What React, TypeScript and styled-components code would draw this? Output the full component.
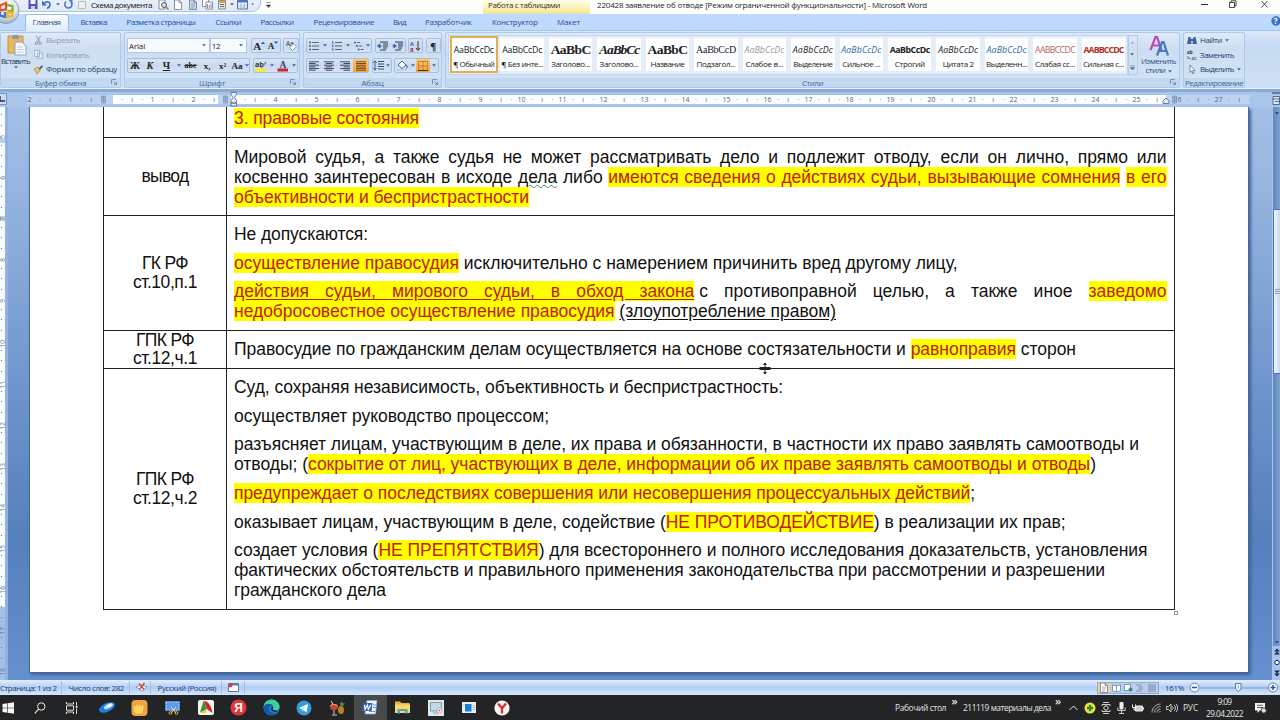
import { useLayoutEffect, useRef } from "react";
import type { ReactNode } from "react";
import styled, { createGlobalStyle, css } from "styled-components";

const GlobalStyle = createGlobalStyle`
  * {
    box-sizing: border-box;
  }

  body {
    margin: 0;
    overflow: hidden;
  }
`;

const Window = styled.div`
  background: #6f97cd;
  color: #1e395b;
  display: flex;
  flex-direction: column;
  font-family: "Open Sans", "Noto Sans", sans-serif;
  font-size: 8px;
  height: 720px;
  line-height: 10px;
  overflow: hidden;
  position: relative;
  white-space: nowrap;
  width: 1280px;
`;

/* Text */

const FitSpan = styled.span`
  display: inline-block;
  white-space: nowrap;
`;

type FitProps = {
  w: number;
  children: ReactNode;
};

// Spreads the letters so that the text takes exactly w pixels
const Fit = ({ w, children }: FitProps) => {
  const ref = useRef<HTMLSpanElement>(null);

  useLayoutEffect(() => {
    const el = ref.current;
    if (!el) return;
    el.style.letterSpacing = "0px";
    const natural = el.getBoundingClientRect().width;
    const count = el.textContent?.length || 1;
    el.style.letterSpacing = `${(w - natural) / count}px`;
  }, [w, children]);

  return <FitSpan ref={ref}>{children}</FitSpan>;
};

/* Title bar */

const TitleBar = styled.header`
  background: #fffffc;
  display: flex;
  flex: none;
  height: 14px;
`;

const QuickAccess = styled.div`
  align-items: center;
  background: linear-gradient(#e9f0fa, #dfe9f7);
  border: 1px solid #b3c3da;
  border-left: 0;
  border-radius: 0 0 9px 0;
  border-top: 0;
  display: flex;
  height: 12px;
  padding: 0 0 2px 27px;
  width: 261px;
`;

const Slot = styled.div<{ w: number }>`
  align-items: center;
  color: #111;
  display: flex;
  flex: none;
  height: 10px;
  justify-content: center;
  width: ${({ w }) => w}px;
`;

const TitleGap = styled.div<{ w: number }>`
  flex: none;
  width: ${({ w }) => w}px;
`;

const ContextTitle = styled.div`
  background: linear-gradient(#fffdf0, #f9efa0 75%, #e6e3a8);
  color: #333;
  padding-left: 5px;
  width: 107px;
`;

const DocTitle = styled.div`
  color: #222;
  padding-left: 7px;
  width: 605px;
`;

const WindowButtons = styled.div`
  display: flex;
  gap: 20px;
`;

const OfficeButton = styled.div`
  left: -7px;
  position: absolute;
  top: -4px;
`;

/* Tabs */

const TabStrip = styled.nav`
  align-items: center;
  background: #bfdaff;
  border-bottom: 1px solid #a7c4ea;
  display: flex;
  flex: none;
  height: 17px;
  padding-left: 24px;
`;

const Tab = styled.div<{ ml: number; active?: boolean }>`
  color: #2d5186;
  height: 17px;
  margin-left: ${({ ml }) => ml}px;
  padding-top: 3px;

  ${({ active }) =>
    active &&
    css`
      background: linear-gradient(#fafcff, #e0ecfa);
      border: 1px solid #9dbbe0;
      border-bottom: 0;
      border-radius: 3px 3px 0 0;
      margin-top: 1px;
      padding: 2px 7px 0;
    `}
`;

const HelpSlot = styled.div`
  margin-left: auto;
`;

/* Ribbon */

const Ribbon = styled.section`
  background: linear-gradient(#dbe8f8, #c8dbf2 25%, #cfe0f5);
  border-bottom: 1px solid #eaf3fd;
  display: flex;
  flex: none;
  gap: 3px;
  height: 58px;
  padding-top: 1px;
`;

const Group = styled.div<{ w: number }>`
  background: linear-gradient(#dfeaf7, #cddef2 30%, #d3e4f6);
  border: 1px solid #b0c9e8;
  border-radius: 2px;
  display: flex;
  flex: none;
  flex-direction: column;
  height: 56px;
  width: ${({ w }) => w}px;
`;

const GroupBody = styled.div`
  flex: 1;
  min-height: 0;
`;

const Caption = styled.div`
  align-items: center;
  background: #c1d8f1;
  color: #46699c;
  display: flex;
  height: 9px;
  justify-content: center;
  position: relative;
`;

const Launcher = styled.svg`
  position: absolute;
  right: 3px;
  top: 1px;
`;

const ToolRow = styled.div<{ top: number }>`
  display: flex;
  gap: 2.5px;
  padding: ${({ top }) => top}px 0 0 2px;
`;

const ToolBox = styled.div`
  align-items: center;
  background: linear-gradient(#d8e5f5, #c8d9ef 50%, #d4e3f5);
  border: 1px solid #a5bfe0;
  border-radius: 2px;
  display: flex;
  flex: none;
  height: 15px;
`;

const Tool = styled.div<{ w: number; on?: boolean }>`
  align-items: center;
  background: ${({ on }) => (on ? "linear-gradient(#fbc77a, #f3a33d)" : "none")};
  color: #222;
  display: flex;
  flex: none;
  height: 13px;
  justify-content: center;
  width: ${({ w }) => w}px;
`;

const Combo = styled.div<{ w: number }>`
  align-items: center;
  background: #f6fafe;
  border: 1px solid #b0c8e6;
  color: #222;
  display: flex;
  height: 15px;
  justify-content: space-between;
  margin-right: -2.5px;
  padding: 0 3px 0 1px;
  width: ${({ w }) => w}px;
`;

const Letter = styled.span<{
  size?: number;
  italic?: boolean;
  line?: string;
  color?: string;
}>`
  color: ${({ color }) => color || "#222"};
  font-family: "Liberation Serif", serif;
  font-size: ${({ size }) => size || 9}px;
  font-style: ${({ italic }) => (italic ? "italic" : "normal")};
  font-weight: bold;
  text-decoration: ${({ line }) => line || "none"};
`;

const ClipboardBody = styled.div`
  display: flex;
`;

const PasteButton = styled.div`
  align-items: center;
  display: flex;
  flex-direction: column;
  padding-top: 1px;
  width: 29px;
`;

const CommandList = styled.div<{ left: number }>`
  display: flex;
  flex-direction: column;
  gap: 4.6px;
  padding: 2px 0 0 ${({ left }) => left}px;
`;

const Command = styled.div<{ faded?: boolean }>`
  align-items: center;
  color: ${({ faded }) => (faded ? "#8d9bb0" : "#1f3f72")};
  display: flex;
  gap: 3px;
  height: 10px;
`;

const StylesBody = styled.div`
  display: flex;
  height: 45px;
`;

const Gallery = styled.div`
  background: #e3eef9;
  border: 1px solid #c1d5ee;
  display: flex;
  gap: 4.9px;
  height: 40px;
  margin: 2px 0 0 2px;
  padding: 2px 0 0 3px;
  width: 681px;
`;

const StyleCard = styled.div<{ on?: boolean }>`
  align-items: center;
  background: #fdfeff;
  color: #222;
  display: flex;
  flex: none;
  flex-direction: column;
  height: 33px;
  outline: ${({ on }) => (on ? "2px solid #e2ae54" : "none")};
  width: 43.55px;
`;

const Sample = styled.div<{ look: string; tint?: string }>`
  color: ${({ tint }) => tint || "#222"};
  font-size: 8.8px;
  height: 16px;
  line-height: 16px;
  margin-top: 4px;
  width: 40px;

  ${({ look }) =>
    look.includes("serif") &&
    css`
      font-family: "Liberation Serif", serif;
      font-size: 10px;
    `}
  ${({ look }) =>
    look.includes("big") &&
    css`
      font-family: "Liberation Serif", serif;
      font-size: 13.5px;
      font-weight: bold;
    `}
  ${({ look }) => look.includes("italic") && "font-style: italic;"}
  ${({ look }) => look.includes("bold") && "font-weight: bold;"}
  ${({ look }) =>
    look.includes("line") &&
    css`
      text-decoration: underline;
      text-underline-offset: 1.5px;
    `}
`;

const CardLabel = styled.div`
  line-height: 10px;
  margin-top: 1px;
`;

const GalleryScroll = styled.div`
  border: 1px solid #b4cbe8;
  display: flex;
  flex-direction: column;
  height: 40px;
  justify-content: space-around;
  margin: 2px 0 0;
  padding-left: 1px;
  width: 10px;
`;

const ChangeStyles = styled.div`
  align-items: center;
  color: #2d4f86;
  display: flex;
  flex-direction: column;
  line-height: 8.6px;
  padding-top: 3px;
  width: 41px;
`;

/* Ruler */

const RulerBar = styled.div`
  background: #a9c5ea;
  border-top: 3px solid #88aad6;
  display: flex;
  flex: none;
  height: 18px;
  position: relative;
`;

const Ruler = styled.div`
  background: linear-gradient(
    90deg,
    #bdd3ef 0 86px,
    #fcfdff 86px 191px,
    #bdd3ef 191px 204px,
    #fcfdff 204px 1139px,
    #bdd3ef 1139px
  );
  display: grid;
  grid-template-columns: repeat(120, 10.2575px);
  height: 9px;
  margin: 3px 0 0 27px;
  overflow: hidden;
  width: 1223px;
`;

const RulerMark = styled.span`
  color: #58677d;
  display: flex;
  font-size: 7px;
  justify-content: center;
  line-height: 9px;
  margin-left: -5px;
`;

const TabSelector = styled.div`
  background: #c9dcf4;
  border: 1px solid #6f94c9;
  height: 12px;
  left: -8px;
  position: absolute;
  top: 1px;
  width: 15px;
`;

const RulerPin = styled.svg<{ x: number }>`
  left: ${({ x }) => x}px;
  position: absolute;
  top: 0;
`;

/* Document area */

const Workspace = styled.main`
  background: linear-gradient(#a4c0e6, #8aabd9 25%, #6d94cc 50%, #5680bd 75%, #6590cd);
  display: flex;
  flex: 1;
  min-height: 0;
`;

const SideRuler = styled.div`
  background: linear-gradient(
    #fafcff 0 31px,
    #bccfe9 31px 36px,
    #fafcff 36px 109px,
    #bccfe9 109px 114px,
    #fafcff 114px 500px,
    #a3c0ea 500px
  );
  border-right: 3px solid #90b2e0;
  display: flex;
  flex-direction: column;
  overflow: hidden;
  width: 8px;
`;

const SideMark = styled.div`
  align-items: center;
  color: #6b7686;
  display: flex;
  flex: none;
  font-size: 6.5px;
  height: 10.2575px;
  line-height: 5px;
  position: relative;
  top: -2.8px;
  width: 5px;
  writing-mode: vertical-rl;
`;

const SideLabel = styled.span`
  transform: rotate(180deg);
`;

const SideTick = styled.span<{ len: number }>`
  background: #6b7686;
  height: ${({ len }) => len}px;
  margin-right: 2px;
  width: 1px;
`;

const Page = styled.article`
  background: #fff;
  border: solid #49689a;
  border-width: 0 1px 1px;
  box-shadow: 2px 2px 3px #3e639c;
  color: #111;
  font-family: "Liberation Sans", Arial, sans-serif;
  font-size: 17.5px;
  height: 566px;
  line-height: 20px;
  margin-left: 21px;
  padding-left: 73px;
  position: relative;
  width: 1220px;
`;

const Table = styled.div`
  border: solid #222;
  border-width: 0 1px 1px;
  width: 1072px;
`;

const Row = styled.div<{ h: number }>`
  display: flex;
  height: ${({ h }) => h}px;

  & + & {
    border-top: 1px solid #222;
  }
`;

const HeadCell = styled.div`
  align-items: center;
  border-right: 1px solid #222;
  display: flex;
  flex-direction: column;
  justify-content: center;
  line-height: 18.5px;
  width: 123px;
`;

const BodyCell = styled.div`
  display: flex;
  flex-direction: column;
  gap: 8.6px;
  justify-content: center;
  padding-left: 7px;
`;

const Justified = styled.div`
  text-align: justify;
  text-align-last: justify;
  width: 932.5px;
`;

const Mark = styled.span<{ underline?: boolean }>`
  background: #ff0;
  color: #c0200c;
  text-decoration: ${({ underline }) => (underline ? "underline" : "none")};
  text-underline-offset: 2px;
`;

const Underlined = styled.span`
  text-decoration: underline;
  text-underline-offset: 2px;
`;

const Wavy = styled.span`
  text-decoration: underline wavy #3f8a86 1px;
  text-underline-offset: 1px;
`;

const Nudge = styled.span`
  margin-left: 5px;
`;

const ResizeHandle = styled.div`
  border: 1px solid #999;
  height: 4px;
  left: 1144px;
  position: absolute;
  top: 504px;
  width: 4px;
`;

const SplitCursor = styled.svg`
  left: 729px;
  position: absolute;
  top: 255px;
`;

const ScrollBar = styled.div`
  background: linear-gradient(90deg, #5f88bf, #7ea1d0);
  border-left: 1px solid #a9c6ee;
  display: flex;
  flex-direction: column;
  margin-left: auto;
  width: 8px;
`;

const ScrollThumb = styled.div`
  align-items: center;
  background: linear-gradient(90deg, #f2f6fc, #c6d8ef);
  border: 1px solid #4f74aa;
  border-right: 0;
  display: flex;
  height: 165px;
  justify-content: flex-end;
  margin-top: 91px;
`;

const ScrollGrip = styled.div`
  background: repeating-linear-gradient(#8b9fbd 0 1px, #dfe8f5 1px 2px);
  height: 6px;
  width: 5px;
`;

const ScrollTop = styled.div`
  height: 11px;
  text-align: center;
`;

const ScrollBottom = styled.div`
  height: 10px;
  margin-top: auto;
  text-align: center;
`;

const BrowseButtons = styled.div`
  align-items: center;
  background: #a5c3ee;
  display: flex;
  flex-direction: column;
  gap: 4px;
  height: 34px;
  padding-top: 2px;
`;

/* Status bar */

const StatusBar = styled.footer`
  align-items: center;
  background: linear-gradient(#e4effd, #c9defa 25%, #b1cdf4 50%, #cfe2fb 90%);
  color: #26406c;
  display: flex;
  flex: none;
  height: 15px;
`;

const StatusItem = styled.div<{ w: number; pad?: number }>`
  align-items: center;
  border-right: 1px solid #a3bee3;
  display: flex;
  height: 13px;
  padding-left: ${({ pad }) => pad || 0}px;
  width: ${({ w }) => w}px;
`;

const ViewButtons = styled.div`
  align-items: center;
  background: #b9cfed;
  border: 1px solid #8facd6;
  display: flex;
  height: 12px;
  margin-left: 852px;
  width: 62px;
`;

const ViewButton = styled.div<{ on?: boolean }>`
  align-items: center;
  background: ${({ on }) => (on ? "#f8ce85" : "none")};
  display: flex;
  height: 10px;
  justify-content: center;
  width: 12.2px;
`;

const Zoom = styled.div`
  align-items: center;
  display: flex;
  padding-left: 6px;
`;

/* Taskbar */

const Taskbar = styled.footer`
  align-items: center;
  background: #222425;
  color: #e4e4e4;
  display: flex;
  flex: none;
  height: 25px;
`;

const TaskIcon = styled.div<{ w: number; active?: boolean }>`
  align-items: center;
  background: ${({ active }) => (active ? "#48494b" : "none")};
  display: flex;
  flex: none;
  height: 25px;
  justify-content: center;
  width: ${({ w }) => w}px;
`;

const Tray = styled.div`
  align-items: center;
  display: flex;
  font-size: 8.4px;
  height: 25px;
  margin-left: auto;
  width: 385px;
`;

const TrayIcon = styled.div<{ w: number }>`
  align-items: center;
  display: flex;
  flex: none;
  height: 25px;
  justify-content: center;
  width: ${({ w }) => w}px;
`;

const More = styled.div<{ w: number }>`
  font-size: 11px;
  font-weight: 600;
  padding-bottom: 14px;
  text-align: center;
  width: ${({ w }) => w}px;
`;

const Clock = styled.div`
  align-items: center;
  display: flex;
  flex-direction: column;
  line-height: 11.4px;
  width: 51px;
`;

/* Icons */

const Arrow = ({ c = "#4a668f" }: { c?: string }) => (
  <svg width="4" height="3" viewBox="0 0 4 3">
    <path d="M0 .3h4L2 2.6z" fill={c} />
  </svg>
);

const Bullets = ({ kind }: { kind: "dot" | "num" | "tree" }) => (
  <svg width="10" height="10" viewBox="0 0 10 10">
    {[1.5, 5, 8.5].map((y, i) => {
      const x = kind === "tree" ? i * 1.8 : 0;
      return (
        <g key={y}>
          {kind === "num" ? (
            <path d={`M.8 ${y - 1.3}v2.6`} stroke="#3b5f9a" />
          ) : (
            <circle cx={x + 1} cy={y} r="1" fill="#3b5f9a" />
          )}
          <path d={`M${x + 3} ${y}H${kind === "tree" ? x + 6 : 10}`} stroke="#5b6573" />
        </g>
      );
    })}
  </svg>
);

const AlignIcon = ({ kind }: { kind: "left" | "center" | "right" | "full" }) => (
  <svg width="10" height="10" viewBox="0 0 10 10">
    {[0.8, 2.5, 4.2, 5.9, 7.6, 9.2].map((y, i) => {
      const len = kind === "full" || i % 2 === 0 ? 10 : 6.5;
      const x = kind === "right" ? 10 - len : kind === "center" ? (10 - len) / 2 : 0;
      return (
        <path
          key={y}
          d={`M${x} ${y}h${len}`}
          stroke={kind === "full" ? "#7a4a10" : "#3f4c60"}
        />
      );
    })}
  </svg>
);

const IndentIcon = ({ flip }: { flip?: boolean }) => (
  <svg width="11" height="10" viewBox="0 0 11 10">
    <path d="M3 1h8M6 3h5M6 5h5M6 7h4M3 9h6" stroke="#333b48" />
    <path d={flip ? "M0 5h3M2 3l2.4 2L2 7z" : "M1.5 5H5M3 3L.5 5 3 7z"} stroke="#315fae" fill="#315fae" strokeWidth=".8" />
  </svg>
);

const SheetIcon = ({ tint = "#fff", lines }: { tint?: string; lines?: boolean }) => (
  <svg width="10" height="10" viewBox="0 0 10 10">
    <path d="M1.5 0H6l2.5 2.5v7h-7z" fill={tint} stroke="#68778f" strokeWidth=".8" />
    <path d="M6 0v2.5h2.5" fill="none" stroke="#68778f" strokeWidth=".7" />
    {lines && <path d="M3 4h4M3 6h4M3 8h3" stroke="#7b8ba6" strokeWidth=".7" />}
  </svg>
);

const OfficeLogo = () => (
  <svg width="28" height="28" viewBox="0 0 28 28">
    <defs>
      <radialGradient id="orb" cx=".5" cy=".3" r=".75">
        <stop offset="0" stopColor="#fff" />
        <stop offset=".6" stopColor="#dfe5ee" />
        <stop offset="1" stopColor="#8d9fba" />
      </radialGradient>
    </defs>
    <circle cx="13" cy="14.5" r="13" fill="url(#orb)" stroke="#8196b5" strokeWidth=".8" />
    <g fill="none" strokeWidth="2.4">
      <path d="M7 9.500l6-2.500v6.500l-6 1z" stroke="#e2572b" />
      <path d="M14 9l5.500 1v5h-5" stroke="#83b341" />
      <path d="M7 16v3.500l5 1.500v-5" stroke="#3d78c7" />
      <path d="M14.500 16.500h5v3.500l-5 1z" stroke="#f0b52a" />
    </g>
  </svg>
);

const QatIcons = {
  save: (
    <svg width="10" height="10" viewBox="0 0 10 10">
      <path d="M.5 0h9v9h-9z" fill="#5450b4" />
      <path d="M2.500 0h5v4h-5z" fill="#f2f4fb" />
      <path d="M3 6h4v3H3z" fill="#c9cfe8" />
    </svg>
  ),
  undo: (
    <svg width="10" height="9" viewBox="0 0 10 9">
      <path d="M2 3.500C5 .5 8.500 2 8 5 7.700 6.800 6.500 8 5 8.300" fill="none" stroke="#3d6fc4" strokeWidth="1.6" />
      <path d="M0 .5v5h5z" fill="#3d6fc4" />
    </svg>
  ),
  redo: (
    <svg width="9" height="9" viewBox="0 0 9 9">
      <path d="M2 1.500C-.5 5 1.500 8 4.500 8S9 5 7 2" fill="none" stroke="#4377c8" strokeWidth="1.5" />
      <path d="M4.500 0h4v4z" fill="#4377c8" />
    </svg>
  ),
  table: (
    <svg width="11" height="10" viewBox="0 0 11 10">
      <path d="M.5.5h10v8.500H.5z" fill="#fff" stroke="#52709f" />
      <path d="M.5.5h10v2H.5z" fill="#3f74c9" />
      <path d="M.5 5h10M.5 7h10M4 1v8M7.300 1v8" stroke="#8aa4cb" strokeWidth=".7" />
    </svg>
  ),
  gallery: (
    <svg width="9" height="10" viewBox="0 0 9 10">
      <path d="M.5.5h7v8.500h-7z" fill="#f5e3bd" stroke="#68778f" strokeWidth=".8" />
      <path d="M.8.8h6.400v2H.8z" fill="#e8963c" />
      <path d="M2 4.500h4M2 6.500h4" stroke="#3f74c9" />
    </svg>
  ),
  copies: (
    <svg width="12" height="11" viewBox="0 0 12 11">
      <path d="M.5.5h6v7h-6z" fill="#fff" stroke="#68778f" strokeWidth=".8" />
      <path d="M4 3h6.500v7H4z" fill="#fff" stroke="#68778f" strokeWidth=".8" />
      <path d="M5.500 9V5M7.300 9V6M9 9V4.500" stroke="#8b7f9c" strokeWidth=".9" />
    </svg>
  ),
};

const FontSizeIcon = ({ up }: { up?: boolean }) => (
  <>
    <Letter size={up ? 11 : 9}>A</Letter>
    <svg width="4" height="9" viewBox="0 0 4 9">
      <path d={up ? "M0 3h4L2 .5z" : "M0 .5h4L2 3z"} fill="#2d5bab" />
    </svg>
  </>
);

/* Parts */

const GroupCaption = ({ w, children, plain }: { w: number; children: string; plain?: boolean }) => (
  <Caption>
    <Fit w={w}>{children}</Fit>
    {!plain && (
      <Launcher width="6" height="6" viewBox="0 0 6 6">
        <path d="M.5 5V.5H5M2.500 2.500l3 3M5.500 3v2.500H3" fill="none" stroke="#6384b5" strokeWidth=".8" />
      </Launcher>
    )}
  </Caption>
);

const tabs = [
  { name: "Вставка", ml: 12, w: 26.5 },
  { name: "Разметка страницы", ml: 19.5, w: 69 },
  { name: "Ссылки", ml: 20, w: 25.5 },
  { name: "Рассылки", ml: 19.5, w: 33 },
  { name: "Рецензирование", ml: 20, w: 60.5 },
  { name: "Вид", ml: 19, w: 13 },
  { name: "Разработчик", ml: 19, w: 46.5 },
  { name: "Конструктор", ml: 20.5, w: 45.5 },
  { name: "Макет", ml: 19.5, w: 23 },
];

const cards = [
  { label: "¶ Обычный", w: 41, text: "AaBbCcDc", look: "" },
  { label: "¶ Без инте...", w: 42, text: "AaBbCcDc", look: "" },
  { label: "Заголово...", w: 39, text: "AaBbC", look: "big" },
  { label: "Заголово...", w: 39, text: "AaBbCc", look: "big italic" },
  { label: "Название", w: 34, text: "AaBbC", look: "big" },
  { label: "Подзагол...", w: 39, text: "AaBbCcD", look: "serif" },
  { label: "Слабое в...", w: 38, text: "AaBbCcDc", look: "italic", tint: "#999" },
  { label: "Выделение", w: 39, text: "AaBbCcDc", look: "italic" },
  { label: "Сильное ...", w: 38, text: "AaBbCcDc", look: "italic", tint: "#2f68a0" },
  { label: "Строгий", w: 30, text: "AaBbCcDc", look: "bold" },
  { label: "Цитата 2", w: 31, text: "AaBbCcDc", look: "italic" },
  { label: "Выделенн...", w: 41, text: "AaBbCcDc", look: "italic line", tint: "#2f68a0" },
  { label: "Слабая сс...", w: 40, text: "AABBCCDC", look: "line", tint: "#bd6560" },
  { label: "Сильная с...", w: 41, text: "AABBCCDC", look: "bold line", tint: "#b13028" },
];

const ClipboardGroup = () => (
  <Group w={121}>
    <GroupBody>
      <ClipboardBody>
        <PasteButton>
          <svg width="22" height="22" viewBox="0 0 22 22">
            <path d="M3 2h15v17H3z" fill="#e8b95c" stroke="#b98836" strokeWidth=".8" />
            <path d="M7 3c0-3 7-3 7 0v2H7z" fill="#8d97a8" />
            <path d="M10 8h7l4 4v9H10z" fill="#f4f8fd" stroke="#7d93b5" strokeWidth=".8" />
            <path d="M12 13h6M12 15.500h7M12 18h7" stroke="#b4c3d9" strokeWidth=".8" />
          </svg>
          <Fit w={29}>Вставить</Fit>
          <Arrow />
        </PasteButton>
        <CommandList left={4}>
          <Command faded>
            <svg width="9" height="9" viewBox="0 0 9 9">
              <path d="M2.500 0l3 6M6.500 0l-3 6" stroke="#8996a8" />
              <circle cx="2.500" cy="7.300" r="1.300" fill="none" stroke="#8996a8" />
              <circle cx="6.300" cy="7.300" r="1.300" fill="none" stroke="#8996a8" />
            </svg>
            <Fit w={34}>Вырезать</Fit>
          </Command>
          <Command faded>
            <svg width="9" height="9" viewBox="0 0 9 9">
              <path d="M.5.5h5v6h-5zM3.500 3h5v5.500h-5z" fill="#e6ecf4" stroke="#9aa9bd" strokeWidth=".8" />
            </svg>
            <Fit w={43}>Копировать</Fit>
          </Command>
          <Command>
            <svg width="9" height="9" viewBox="0 0 9 9">
              <path d="M0 4l4-2 2.500 3L3 9z" fill="#efc35f" stroke="#9c7a33" strokeWidth=".6" />
              <path d="M4.500 3.500L8 .3l1 1.200-3 3.300z" fill="#4a5a77" />
            </svg>
            <Fit w={71}>Формат по образцу</Fit>
          </Command>
        </CommandList>
      </ClipboardBody>
    </GroupBody>
    <GroupCaption w={51}>Буфер обмена</GroupCaption>
  </Group>
);

const FontGroup = () => (
  <Group w={176}>
    <GroupBody>
      <ToolRow top={5}>
        <Combo w={83}>
          <Fit w={16}>Arial</Fit>
          <Arrow />
        </Combo>
        <Combo w={37}>
          <Fit w={8.500}>12</Fit>
          <Arrow />
        </Combo>
        <TitleGap w={2} />
        <ToolBox>
          <Tool w={14.500}><FontSizeIcon up /></Tool>
          <Tool w={13}><FontSizeIcon /></Tool>
        </ToolBox>
        <ToolBox>
          <Tool w={14}>
            <svg width="11" height="11" viewBox="0 0 11 11">
              <text x="0" y="6" fontSize="6.500" fill="#333">Aa</text>
              <path d="M3.500 7.500l4-3.500 3 2.500-4 4z" fill="#fff" stroke="#7488a8" strokeWidth=".8" />
            </svg>
          </Tool>
        </ToolBox>
      </ToolRow>
      <ToolRow top={5}>
        <ToolBox>
          <Tool w={14}><Letter size={10}>Ж</Letter></Tool>
          <Tool w={16}><Letter size={10} italic>К</Letter></Tool>
          <Tool w={17}><Letter size={10} line="underline">Ч</Letter></Tool>
          <Tool w={7}><Arrow /></Tool>
          <Tool w={17}><Letter size={8} line="line-through">abc</Letter></Tool>
          <Tool w={16}><Letter>x,</Letter></Tool>
          <Tool w={15}><Letter>x²</Letter></Tool>
          <Tool w={14}><Letter>Aa</Letter></Tool>
          <Tool w={5}><Arrow /></Tool>
        </ToolBox>
        <ToolBox>
          <Tool w={15}>
            <svg width="12" height="12" viewBox="0 0 12 12">
              <path d="M0 8.500h11v3H0z" fill="#f7ee1c" />
              <text x="0" y="7" fontSize="7" fontWeight="bold" fill="#333">ab</text>
              <path d="M6.500 8L11 2" stroke="#76869f" strokeWidth="1.300" />
            </svg>
          </Tool>
          <Tool w={7}><Arrow /></Tool>
          <Tool w={15}>
            <svg width="12" height="12" viewBox="0 0 12 12">
              <path d="M.5 8.500h10.500v3H.5z" fill="#d3202a" />
              <text x="2.500" y="8" fontSize="9.500" fontFamily="Liberation Serif" fontWeight="bold" fill="#2c4778">A</text>
            </svg>
          </Tool>
          <Tool w={6}><Arrow /></Tool>
        </ToolBox>
      </ToolRow>
    </GroupBody>
    <GroupCaption w={26}>Шрифт</GroupCaption>
  </Group>
);

const ParagraphGroup = () => (
  <Group w={139}>
    <GroupBody>
      <ToolRow top={5}>
        <ToolBox>
          <Tool w={14}><Bullets kind="dot" /></Tool>
          <Tool w={8}><Arrow /></Tool>
          <Tool w={15}><Bullets kind="num" /></Tool>
          <Tool w={8}><Arrow /></Tool>
          <Tool w={13}><Bullets kind="tree" /></Tool>
          <Tool w={6}><Arrow /></Tool>
        </ToolBox>
        <ToolBox>
          <Tool w={14.500}><IndentIcon /></Tool>
          <Tool w={14.500}><IndentIcon flip /></Tool>
        </ToolBox>
        <ToolBox>
          <Tool w={13}>
            <svg width="11" height="12" viewBox="0 0 11 12">
              <text x="0" y="5.500" fontSize="5.500" fontWeight="bold" fill="#3460a8">A</text>
              <text x="0" y="11.500" fontSize="5.500" fontWeight="bold" fill="#a03038">Я</text>
              <path d="M8 1v9M6 8l2 2.500L10 8" fill="none" stroke="#333" />
            </svg>
          </Tool>
        </ToolBox>
        <ToolBox>
          <Tool w={13.500}><Letter size={11}>¶</Letter></Tool>
        </ToolBox>
      </ToolRow>
      <ToolRow top={5}>
        <ToolBox>
          <Tool w={14}><AlignIcon kind="left" /></Tool>
          <Tool w={16}><AlignIcon kind="center" /></Tool>
          <Tool w={16}><AlignIcon kind="right" /></Tool>
          <Tool w={15} on><AlignIcon kind="full" /></Tool>
        </ToolBox>
        <ToolBox>
          <Tool w={12}>
            <svg width="11" height="11" viewBox="0 0 11 11">
              <path d="M5 1.500h6M5 4h6M5 6.500h6M5 9h6" stroke="#3f4c60" />
              <path d="M2 1v9M.3 3L2 .8 3.700 3M.3 8L2 10.200 3.700 8" fill="none" stroke="#315fae" />
            </svg>
          </Tool>
          <Tool w={6}><Arrow /></Tool>
        </ToolBox>
        <ToolBox>
          <Tool w={14}>
            <svg width="11" height="11" viewBox="0 0 11 11">
              <path d="M1 5l4-4 4 4-4 3.500z" fill="#fff" stroke="#51698f" />
              <path d="M9 4.500c1.500 2 1.500 3.500.5 4" fill="none" stroke="#315fae" />
              <path d="M0 9.500h9v1.500H0z" fill="#dbe6f5" stroke="#8aa0c2" strokeWidth=".4" />
            </svg>
          </Tool>
          <Tool w={7}><Arrow /></Tool>
          <Tool w={14} on>
            <svg width="10" height="10" viewBox="0 0 10 10">
              <path d="M.5.5h9v9h-9zM5 0v10M0 5h10" fill="none" stroke="#c47a20" strokeWidth=".9" />
              <path d="M0 9.500h10" stroke="#4f2f05" />
            </svg>
          </Tool>
          <Tool w={8}><Arrow /></Tool>
        </ToolBox>
      </ToolRow>
    </GroupBody>
    <GroupCaption w={22}>Абзац</GroupCaption>
  </Group>
);

const StylesGroup = () => (
  <Group w={735}>
    <GroupBody>
      <StylesBody>
        <Gallery>
          {cards.map((card, i) => (
            <StyleCard key={i} on={i === 0}>
              <Sample look={card.look} tint={card.tint}>
                <Fit w={40}>{card.text}</Fit>
              </Sample>
              <CardLabel>
                <Fit w={card.w}>{card.label}</Fit>
              </CardLabel>
            </StyleCard>
          ))}
        </Gallery>
        <GalleryScroll>
          <svg width="5" height="3" viewBox="0 0 4 3"><path d="M0 2.600h4L2 .3z" fill="#9db0cb" /></svg>
          <Arrow />
          <svg width="5" height="5" viewBox="0 0 5 5"><path d="M0 .5h5M0 2.300h5L2.500 5z" stroke="#5476a6" strokeWidth=".5" fill="#5476a6" /></svg>
        </GalleryScroll>
        <ChangeStyles>
          <svg width="20" height="21" viewBox="0 0 20 21">
            <path d="M1.500 14L6.500 1h1.500l4.500 13M3.500 9.500h7" fill="none" stroke="#b64bb0" strokeWidth="2.200" />
            <path d="M8 19.500L13 6h1.500l4.500 13.500M10 15h7.500" fill="none" stroke="#4678c6" strokeWidth="2.200" />
          </svg>
          <Fit w={35}>Изменить</Fit>
          <span>
            <Fit w={20}>стили</Fit> <Arrow />
          </span>
        </ChangeStyles>
      </StylesBody>
    </GroupBody>
    <GroupCaption w={21}>Стили</GroupCaption>
  </Group>
);

const EditGroup = () => (
  <Group w={62}>
    <GroupBody>
      <CommandList left={3}>
        <Command>
          <svg width="10" height="9" viewBox="0 0 10 9">
            <path d="M1.500 1h2l1 7H0zM6.500 1h2L10 8H5.500zM3.500 3h3v2h-3z" fill="#3c5f9d" />
          </svg>
          <Fit w={22}>Найти</Fit> <Arrow />
        </Command>
        <Command>
          <svg width="10" height="10" viewBox="0 0 10 10">
            <text x="0" y="4" fontSize="4.500" fontWeight="bold" fill="#333">ab</text>
            <text x="4.500" y="9.800" fontSize="4.500" fontWeight="bold" fill="#2f8a5b">ac</text>
            <path d="M1 6v2.500h2.500" fill="none" stroke="#315fae" strokeWidth=".8" />
          </svg>
          <Fit w={34}>Заменить</Fit>
        </Command>
        <Command>
          <svg width="10" height="9" viewBox="0 0 10 9">
            <path d="M3 0v7.500l1.700-1.600L6 9l1-.5-1.300-3H8z" fill="#fff" stroke="#5b6f92" strokeWidth=".8" />
          </svg>
          <Fit w={34}>Выделить</Fit> <Arrow />
        </Command>
      </CommandList>
    </GroupBody>
    <GroupCaption w={58} plain>Редактирование</GroupCaption>
  </Group>
);

const rulerMarks = Array.from({ length: 120 }, (_, i) => {
  if (i % 4 === 2) return "ı";
  if (i % 4) return "·";
  const n = i / 4 - 2;
  return n === 0 || n === 3 ? "" : String(Math.abs(n));
});

const marginPins = [101, 223, 1172];

const HorizontalRuler = () => (
  <RulerBar>
    <TabSelector>
      <svg width="13" height="10" viewBox="0 0 13 10"><path d="M7 2v5h5" fill="none" stroke="#234" strokeWidth="1.400" /></svg>
    </TabSelector>
    <Ruler>
      {rulerMarks.map((mark, i) => (
        <RulerMark key={i}>{mark}</RulerMark>
      ))}
    </Ruler>
    {marginPins.map((x) => (
      <RulerPin key={x} x={x} width="5" height="14" viewBox="0 0 5 14">
        <path d="M.5 4h4v7h-4zM.5 6h4M.5 8.500h4M2.500 4v7" fill="#a6bddd" stroke="#6f8bb3" strokeWidth=".6" />
      </RulerPin>
    ))}
    <RulerPin x={230} width="8" height="15" viewBox="0 0 8 15">
      <path d="M1 .5h5.500v2L4.500 5.500l2 3V11H1V8.500l2-3-2-3zM1 11h5.500v3H1z" fill="#e6eefa" stroke="#5a7099" strokeWidth=".9" />
    </RulerPin>
    <RulerPin x={1162} width="8" height="14" viewBox="0 0 8 14">
      <path d="M1 11.500V9l3-3 3 3v2.500z" fill="#e6eefa" stroke="#5a7099" strokeWidth=".9" />
    </RulerPin>
    <RulerPin x={1272} width="8" height="15" viewBox="0 0 8 15">
      <path d="M0 1h8" stroke="#234" />
      <path d="M1 4.500h6.500v8H1zM1 7h7M3 9.500h5" fill="#dfe9f6" stroke="#445d88" strokeWidth=".9" />
    </RulerPin>
  </RulerBar>
);

const VerticalRuler = () => (
  <SideRuler>
    {Array.from({ length: 56 }, (_, i) => (
      <SideMark key={i}>
        {i % 4 === 3 ? (
          <SideLabel>{5 + Math.floor(i / 4)}</SideLabel>
        ) : (
          <SideTick len={1} />
        )}
      </SideMark>
    ))}
  </SideRuler>
);

const DocumentPage = () => (
  <Page>
    <Table>
      <Row h={30}>
        <HeadCell />
        <BodyCell>
          <div><Fit w={185}><Mark>3. правовые состояния</Mark></Fit></div>
          <TitleGap w={0} />
        </BodyCell>
      </Row>
      <Row h={78}>
        <HeadCell><Fit w={47}>вывод</Fit></HeadCell>
        <BodyCell>
          <div>
            <Justified>
              Мировой судья, а также судья не может рассматривать дело и подлежит отводу, если он лично, прямо или
            </Justified>
            <Justified>
              косвенно заинтересован в исходе <Wavy>дела</Wavy> либо{" "}
              <Mark>имеются сведения о действиях судьи, вызывающие сомнения</Mark> <Mark>в его</Mark>
            </Justified>
            <div><Fit w={295}><Mark>объективности и беспристрастности</Mark></Fit></div>
          </div>
        </BodyCell>
      </Row>
      <Row h={114.500}>
        <HeadCell>
          <Fit w={46}>ГК РФ</Fit>
          <Fit w={64}>ст.10,п.1</Fit>
        </HeadCell>
        <BodyCell>
          <div><Fit w={134}>Не допускаются:</Fit></div>
          <div>
            <Fit w={723.500}><Mark>осуществление правосудия</Mark> исключительно с намерением причинить вред другому лицу,</Fit>
          </div>
          <div>
            <Justified>
              <Mark underline>действия судьи, мирового судьи, в обход закона</Mark>
              <Nudge>с</Nudge> противоправной целью, а также иное <Mark>заведомо</Mark>
            </Justified>
            <div>
              <Fit w={602}><Mark>недобросовестное осуществление правосудия</Mark> <Underlined>(злоупотребление правом)</Underlined></Fit>
            </div>
          </div>
        </BodyCell>
      </Row>
      <Row h={38.500}>
        <HeadCell>
          <Fit w={58}>ГПК РФ</Fit>
          <Fit w={64}>ст.12,ч.1</Fit>
        </HeadCell>
        <BodyCell>
          <div>
            <Fit w={842}>Правосудие по гражданским делам осуществляется на основе состязательности и <Mark>равноправия</Mark> сторон</Fit>
          </div>
        </BodyCell>
      </Row>
      <Row h={240.500}>
        <HeadCell>
          <Fit w={58}>ГПК РФ</Fit>
          <Fit w={64}>ст.12,ч.2</Fit>
        </HeadCell>
        <BodyCell>
          <div><Fit w={549}>Суд, сохраняя независимость, объективность и беспристрастность:</Fit></div>
          <div><Fit w={315}>осуществляет руководство процессом;</Fit></div>
          <div>
            <Fit w={905}>разъясняет лицам, участвующим в деле, их права и обязанности, в частности их право заявлять самоотводы и</Fit>
            <br />
            <Fit w={862}>отводы; (<Mark>сокрытие от лиц, участвующих в деле, информации об их праве заявлять самоотводы и отводы</Mark>)</Fit>
          </div>
          <div>
            <Fit w={741}><Mark>предупреждает о последствиях совершения или несовершения процессуальных действий</Mark>;</Fit>
          </div>
          <div>
            <Fit w={831.500}>оказывает лицам, участвующим в деле, содействие (<Mark>НЕ ПРОТИВОДЕЙСТВИЕ</Mark>) в реализации их прав;</Fit>
          </div>
          <div>
            <Fit w={913.500}>создает условия (<Mark>НЕ ПРЕПЯТСТВИЯ</Mark>) для всестороннего и полного исследования доказательств, установления</Fit>
            <br />
            <Fit w={871}>фактических обстоятельств и правильного применения законодательства при рассмотрении и разрешении</Fit>
            <br />
            <Fit w={152}>гражданского дела</Fit>
          </div>
        </BodyCell>
      </Row>
    </Table>
    <ResizeHandle />
    <SplitCursor width="12" height="13" viewBox="0 0 12 13">
      <path d="M.5 5.500h11M.5 7.500h11M6 1v4M6 8v4" stroke="#222" />
      <path d="M4 3l2-2.500L8 3zM4 10l2 2.500L8 10z" fill="#222" />
    </SplitCursor>
  </Page>
);

const TaskIcons = () => (
  <>
    <TaskIcon w={16}>
      <svg width="12" height="12" viewBox="0 0 12 12"><path d="M.5 2l4.700-.7v4.400H.5zM5.800 1.200L12 .3v5.400H5.800zM.5 6.300h4.700v4.400L.5 10zM5.800 6.300H12v5.400l-6.200-.9z" fill="#f4f4f4" /></svg>
    </TaskIcon>
    <TitleGap w={8} />
    <TaskIcon w={32}>
      <svg width="12" height="12" viewBox="0 0 12 12"><circle cx="7.300" cy="4.500" r="3.700" fill="none" stroke="#eee" /><path d="M4.700 7.200L.8 11.400" stroke="#eee" strokeWidth="1.200" /></svg>
    </TaskIcon>
    <TaskIcon w={32}>
      <svg width="12" height="12" viewBox="0 0 12 12"><path d="M.5 0v2h7V0M.5 12v-2h7v2M.5 3.800h7v4.400h-7zM10.500 0v3M10.500 6.500V12" fill="none" stroke="#ddd" /><path d="M9.700 3.700h1.800v2H9.700z" fill="#fff" /></svg>
    </TaskIcon>
    <TitleGap w={2.500} />
    <TaskIcon w={32.900}>
      <svg width="18" height="13" viewBox="0 0 18 13">
        <ellipse cx="9" cy="6.500" rx="8.500" ry="4.300" transform="rotate(-24 9 6.500)" fill="#1f7fe0" />
        <ellipse cx="10.500" cy="5.300" rx="5" ry="2.300" transform="rotate(-26 10.500 5.300)" fill="#a5dcff" />
        <ellipse cx="11" cy="4.800" rx="3" ry="1.200" transform="rotate(-26 11 4.800)" fill="#fff" />
      </svg>
    </TaskIcon>
    <TaskIcon w={32.900}>
      <svg width="17" height="16" viewBox="0 0 17 16">
        <rect x=".5" y="0" width="16" height="16" rx="4" fill="#f2a440" />
        <path d="M4 14c-2-2-2-5-1.500-8 .3-1.600 2-1.600 2.200 0 0-3 2.600-3 2.800 0 .3-2.600 2.600-2.600 2.800 0 .5-2 2.600-1.800 2.600.5 0 3-.2 6-2 7.500z" fill="#ffd562" stroke="#dd8a26" strokeWidth=".6" />
      </svg>
    </TaskIcon>
    <TaskIcon w={32.900}>
      <svg width="16" height="15" viewBox="0 0 16 15">
        <path d="M0 1h15v10H0z" fill="#3c78c9" />
        <path d="M1 2h13v8H1z" fill="#5d9be6" stroke="#d2e6fc" strokeDasharray="1.500 1" strokeWidth=".7" />
        <path d="M6 7l5 6M11 7l-5 6" stroke="#e9e2c8" />
        <circle cx="5.500" cy="13" r="1.400" fill="none" stroke="#e5b62b" />
        <circle cx="11.500" cy="13" r="1.400" fill="none" stroke="#e5b62b" />
      </svg>
    </TaskIcon>
    <TaskIcon w={32.900}>
      <svg width="16" height="15" viewBox="0 0 16 15">
        <rect width="16" height="15" rx="2" fill="#f5f5f0" />
        <path d="M5.500 1C10 1 13 5 14.500 13L9.500 9.500z" fill="#d72323" />
        <path d="M5.500 1L9 9 2 12.500z" fill="#2f9637" />
        <path d="M9 9l-7 3.500 5 1z" fill="#f2c52e" />
      </svg>
    </TaskIcon>
    <TaskIcon w={32.900}>
      <svg width="17" height="17" viewBox="0 0 17 17">
        <circle cx="8.500" cy="8.500" r="8" fill="#e8343a" />
        <text x="8.500" y="12.700" fontSize="12" fontWeight="bold" fill="#fff" textAnchor="middle" fontFamily="Liberation Sans">Я</text>
      </svg>
    </TaskIcon>
    <TaskIcon w={32.900}>
      <svg width="17" height="17" viewBox="0 0 17 17">
        <circle cx="8.500" cy="8.500" r="8" fill="#1b7fce" />
        <path d="M.6 7C2 1 8-1 12.500 1.500c4 2.300 5 6.500 3.500 8.500-2 2-6 1.500-6 0 1.500-2-.5-4-3-4C4 6 1.500 7.500.6 9z" fill="#3fcf9c" />
        <path d="M.6 7.500c1.500-3 7-4 9.500-.5C6 6.500 5 9.500 6.500 12c1.500 2.300 5 2.500 7.500 1.500C9 18.500.5 16 .6 7.500z" fill="#1557a8" />
        <path d="M9.500 7.500c-2 1-2 4 1 5 2 .6 4 0 5-1-2 .5-6 0-6-1.500.8-.8.7-1.700 0-2.500z" fill="#222425" />
      </svg>
    </TaskIcon>
    <TaskIcon w={32.900}>
      <svg width="16" height="16" viewBox="0 0 16 16">
        <circle cx="8" cy="8" r="7.500" fill="#2f9fd6" />
        <path d="M3 8l9-4-1.500 8.500L7.500 10l-1.300 1.500V9.300L10 6 5.300 8.900z" fill="#fff" />
      </svg>
    </TaskIcon>
    <TaskIcon w={32.900}>
      <svg width="16" height="16" viewBox="0 0 16 16">
        <ellipse cx="5" cy="7" rx="4" ry="3" fill="#d2452e" />
        <path d="M1 6c2-2 6-2 8 0" stroke="#e9a58d" fill="none" />
        <path d="M5 10v4M3 15h5" stroke="#cfd3d6" />
        <ellipse cx="12" cy="10" rx="3" ry="4" fill="#b68527" />
        <path d="M12 6l-2-3.500 2 1 1-2.500 1 2.500 2-.5-2 3z" fill="#4d9438" />
        <path d="M2 1l2 3" stroke="#e8e3db" />
      </svg>
    </TaskIcon>
    <TaskIcon w={32.900} active>
      <svg width="16" height="15" viewBox="0 0 16 15">
        <path d="M5 .5h10L13.500 14H3z" fill="#eef4fc" stroke="#8da9d2" strokeWidth=".7" />
        <path d="M11 5h3M11 7.500h3M7 11.500h6" stroke="#6e93cc" />
        <path d="M1 3h9.500L9.500 11H0z" fill="#2f62b5" />
        <path d="M2.500 4.800l.6 4.500L5.500 5l.8 4.300L9 4.800" fill="none" stroke="#fff" strokeWidth="1.200" />
      </svg>
    </TaskIcon>
    <TaskIcon w={32.900}>
      <svg width="15" height="13" viewBox="0 0 15 13">
        <path d="M0 .5h5l1.500 1.500H14.500V12H0z" fill="#e8b53d" />
        <path d="M0 3.500h15V12H0z" fill="#fbd868" />
        <path d="M2.500 12.500V8h10v4.500H10V10H5v2.500z" fill="#4aa3c9" />
      </svg>
    </TaskIcon>
    <TaskIcon w={32.900}>
      <svg width="16" height="16" viewBox="0 0 16 16">
        <path d="M0 0h16v16H0z" fill="#dce9f1" />
        <path d="M2.500 2.500h11v8.500h-11z" fill="#c2d8e6" stroke="#7b9cb3" />
        <path d="M5 13h5" stroke="#7b9cb3" />
        <circle cx="11.500" cy="10.500" r="2.500" fill="#f7eef0" stroke="#cf8a94" strokeWidth=".7" />
        <circle cx="11.500" cy="10.500" r=".8" fill="#cc3a4a" />
      </svg>
    </TaskIcon>
    <TaskIcon w={32.900}>
      <svg width="14" height="11" viewBox="0 0 14 11">
        <path d="M0 0h14v11H0z" fill="#e9eef1" />
        <path d="M3 2h6.500v7.500H3z" fill="#1780d8" />
        <path d="M10.500 3.500h3M10.500 5.500h3M10.500 7.500h3M.5 3h2" stroke="#9cb1bf" strokeWidth=".8" />
      </svg>
    </TaskIcon>
    <TaskIcon w={32.900}>
      <svg width="16" height="16" viewBox="0 0 16 16">
        <circle cx="8" cy="8" r="7.600" fill="#f6f3f2" />
        <path d="M4 3.500l4 4.800 4-4.800M8 8v5.500" fill="none" stroke="#d12b33" strokeWidth="2.200" />
      </svg>
    </TaskIcon>
  </>
);

const App = () => (
  <>
    <GlobalStyle />
    <Window>
      <TitleBar>
        <QuickAccess>
          <Slot w={11}>{QatIcons.save}</Slot>
          <Slot w={18}>{QatIcons.undo}</Slot>
          <Slot w={4}><Arrow /></Slot>
          <Slot w={17}>{QatIcons.redo}</Slot>
          <Slot w={10}>
            <svg width="8" height="8" viewBox="0 0 8 8"><path d="M.5.5h7v7h-7z" fill="#f1f1ee" stroke="#bbb" /></svg>
          </Slot>
          <Slot w={69}><Fit w={61}>Схема документа</Fit></Slot>
          <Slot w={14}>
            <svg width="11" height="10" viewBox="0 0 11 10">
              <path d="M1 0h6v9H1z" fill="#fff" stroke="#68778f" strokeWidth=".8" />
              <circle cx="6" cy="5" r="2.500" fill="#cfe0f2" stroke="#556" />
              <path d="M8 7l2.500 2.500" stroke="#a57331" strokeWidth="1.400" />
            </svg>
          </Slot>
          <Slot w={15}><SheetIcon /></Slot>
          <Slot w={15}><SheetIcon tint="#cdd8e8" lines /></Slot>
          <Slot w={15}>{QatIcons.copies}</Slot>
          <Slot w={14}>{QatIcons.gallery}</Slot>
          <Slot w={5}><Arrow /></Slot>
          <Slot w={17}>{QatIcons.table}</Slot>
          <Slot w={3}><Arrow /></Slot>
        </QuickAccess>
        <Slot w={14}>
          <svg width="5" height="6" viewBox="0 0 5 6"><path d="M.5.5h4M.3 3h4.400L2.500 5.500z" stroke="#444" strokeWidth=".6" fill="#444" /></svg>
        </Slot>
        <TitleGap w={208} />
        <ContextTitle><Fit w={72}>Работа с таблицами</Fit></ContextTitle>
        <DocTitle><Fit w={330}>220428 заявление об отводе [Режим ограниченной функциональности] - Microsoft Word</Fit></DocTitle>
        <WindowButtons>
          <svg width="14" height="10" viewBox="0 0 14 10"><path d="M6 4.500h7" stroke="#333" /></svg>
          <svg width="8" height="9" viewBox="0 0 8 9"><path d="M.5 2.500h5v5h-5zM2 2.500V.8h5V6H5.500" fill="none" stroke="#333" strokeWidth=".9" /></svg>
          <svg width="14" height="9" viewBox="0 0 14 9"><path d="M4.500 1l6 6.500M10.500 1l-6 6.500" stroke="#333" strokeWidth=".9" /></svg>
        </WindowButtons>
      </TitleBar>
      <TabStrip>
        <Tab ml={0.5} active><Fit w={28}>Главная</Fit></Tab>
        {tabs.map((tab) => (
          <Tab key={tab.name} ml={tab.ml}>
            <Fit w={tab.w}>{tab.name}</Fit>
          </Tab>
        ))}
        <HelpSlot>
          <svg width="9" height="10" viewBox="0 0 9 10">
            <circle cx="5" cy="5" r="4.700" fill="#3c72c4" />
            <text x="2.800" y="8" fontSize="8" fontWeight="bold" fill="#fff">?</text>
          </svg>
        </HelpSlot>
      </TabStrip>
      <Ribbon>
        <ClipboardGroup />
        <FontGroup />
        <ParagraphGroup />
        <StylesGroup />
        <EditGroup />
      </Ribbon>
      <HorizontalRuler />
      <Workspace>
        <VerticalRuler />
        <DocumentPage />
        <ScrollBar>
          <ScrollTop><Arrow c="#233f70" /></ScrollTop>
          <ScrollThumb><ScrollGrip /></ScrollThumb>
          <ScrollBottom><Arrow c="#233f70" /></ScrollBottom>
          <BrowseButtons>
            <svg width="6" height="7" viewBox="0 0 6 7"><path d="M0 3.500L3 .5l3 3zM0 6.500l3-3 3 3z" fill="#1b2c4a" /></svg>
            <svg width="6" height="7" viewBox="0 0 6 7"><circle cx="3" cy="3.500" r="2.200" fill="#fff" stroke="#1b2c4a" /></svg>
            <svg width="6" height="7" viewBox="0 0 6 7"><path d="M0 .5l3 3 3-3zM0 3.500l3 3 3-3z" fill="#1b2c4a" /></svg>
          </BrowseButtons>
        </ScrollBar>
      </Workspace>
      <StatusBar>
        <StatusItem w={62}><Fit w={56.500}>Страница: 1 из 2</Fit></StatusItem>
        <StatusItem w={68} pad={6.500}><Fit w={55.500}>Число слов: 282</Fit></StatusItem>
        <StatusItem w={21} pad={6}>
          <svg width="12" height="11" viewBox="0 0 12 11">
            <path d="M0 5l5-2 6 2-5 4z" fill="#fff" stroke="#6f86ad" strokeWidth=".8" />
            <path d="M3 1.500l5 6M8.500 1L3.500 7.500" stroke="#cf4a45" strokeWidth="1.400" />
          </svg>
        </StatusItem>
        <StatusItem w={71} pad={6.500}><Fit w={58.500}>Русский (Россия)</Fit></StatusItem>
        <StatusItem w={23} pad={6}>
          <svg width="11" height="9" viewBox="0 0 11 9">
            <path d="M.5.5h10v8H.5z" fill="#fff" stroke="#5e7396" />
            <path d="M.5.5h10v2H.5z" fill="#5d80ba" />
            <circle cx="2.500" cy="2.500" r="2" fill="#cf4a35" />
          </svg>
        </StatusItem>
        <ViewButtons>
          <ViewButton on><SheetIcon lines /></ViewButton>
          <ViewButton>
            <svg width="9" height="8" viewBox="0 0 9 8"><path d="M.5.8L4.500 2 8.500.8v6L4.500 8 .5 6.800zM4.500 2v6" fill="#fff" stroke="#6b7f9f" strokeWidth=".8" /></svg>
          </ViewButton>
          <ViewButton>
            <svg width="9" height="8" viewBox="0 0 9 8"><path d="M.5.5h6v6h-6z" fill="#fff" stroke="#6b7f9f" strokeWidth=".8" /><circle cx="6.500" cy="5.500" r="2" fill="#3c8a70" /></svg>
          </ViewButton>
          <ViewButton>
            <svg width="8" height="8" viewBox="0 0 8 8"><path d="M0 1h6M2 3h5M2 5h5M0 7h6" stroke="#8595ad" /></svg>
          </ViewButton>
          <ViewButton>
            <svg width="8" height="8" viewBox="0 0 8 8"><path d="M0 1h8M0 3h8M0 5h8M0 7h8" stroke="#7688a4" /></svg>
          </ViewButton>
        </ViewButtons>
        <Zoom>
          <Fit w={19}>161%</Fit>
          <svg width="96" height="13" viewBox="0 0 96 13">
            <path d="M16 7h70" stroke="#7f9cc8" />
            <circle cx="10.500" cy="6.500" r="4.500" fill="#f2f7fe" stroke="#6783ae" />
            <path d="M8 6.500h5" stroke="#33517f" strokeWidth="1.400" />
            <circle cx="89" cy="6.500" r="4.500" fill="#f2f7fe" stroke="#6783ae" />
            <path d="M86.500 6.500h5M89 4v5" stroke="#33517f" strokeWidth="1.400" />
            <path d="M51.500 2.500h5.500V8l-2.700 2.500L51.500 8z" fill="#f2f7fe" stroke="#5876a6" />
            <path d="M54.300 4v3.500" stroke="#8aa2c8" />
          </svg>
        </Zoom>
      </StatusBar>
      <Taskbar>
        <TaskIcons />
        <Tray>
          <Fit w={51}>Рабочий стол</Fit>
          <More w={17}>»</More>
          <Fit w={88}>211119 материалы дела</Fit>
          <More w={14}>»</More>
          <TrayIcon w={16}>
            <svg width="9" height="6" viewBox="0 0 9 6"><path d="M.5 5l4-4 4 4" fill="none" stroke="#e8e8e8" /></svg>
          </TrayIcon>
          <TrayIcon w={17}>
            <svg width="12" height="12" viewBox="0 0 12 12"><circle cx="6" cy="6" r="5.500" fill="#f2de3f" /><circle cx="6" cy="6" r="3.500" fill="#c2d23a" /><path d="M6 3v6M3 6h6" stroke="#1f8a2c" strokeWidth="2" /></svg>
          </TrayIcon>
          <TrayIcon w={16}>
            <svg width="10" height="12" viewBox="0 0 10 12"><path d="M2 .5h6M2 11.500h6M1 4V2.500h8V4M1 8v1.500h8V8" fill="none" stroke="#e0e0e0" strokeWidth=".9" /><circle cx="5" cy="6" r="2.200" fill="none" stroke="#e0e0e0" /></svg>
          </TrayIcon>
          <TrayIcon w={15}>
            <svg width="9" height="12" viewBox="0 0 9 12"><rect x="2.500" y="0" width="4" height="7.500" rx="1" fill="#eee" /><path d="M.8 5.500v3h7.400v-3M4.500 8.500v3M2 11.500h5" fill="none" stroke="#ccc" /></svg>
          </TrayIcon>
          <TrayIcon w={18}>
            <svg width="12" height="8" viewBox="0 0 12 8"><path d="M3.500 2h7v5h-7z" fill="#cfcfcf" stroke="#eee" /><path d="M11.500 3.500v2" stroke="#eee" /><path d="M.5.500v3h3v-3M2 3.500V6h1" fill="none" stroke="#eee" /></svg>
          </TrayIcon>
          <TrayIcon w={17}>
            <svg width="10" height="10" viewBox="0 0 10 10"><path d="M1 9.500C1 5 5 1 9.500 1M3.500 9.500c0-3 3-6 6-6M6 9.500c0-2 1.500-3.500 3.500-3.500M8 9.500L9.500 8" fill="none" stroke="#c8c8c8" strokeWidth=".9" /></svg>
          </TrayIcon>
          <TrayIcon w={15}>
            <svg width="12" height="10" viewBox="0 0 12 10"><path d="M.5 3.500h2L5 1v8L2.500 6.500h-2zM6.500 3.500c.8 1 .8 2 0 3M8.300 2.200c1.500 1.800 1.500 3.800 0 5.600M10 1c2.200 2.500 2.200 5.500 0 8" fill="none" stroke="#dcdcdc" strokeWidth=".9" /></svg>
          </TrayIcon>
          <TitleGap w={4} />
          <Fit w={15}>РУС</Fit>
          <TitleGap w={1} />
          <Clock>
            <Fit w={14}>9:09</Fit>
            <Fit w={37}>29.04.2022</Fit>
          </Clock>
          <TrayIcon w={20}>
            <svg width="13" height="12" viewBox="0 0 13 12"><path d="M1 1h10v7.500H6L3.500 11V8.500H1z" fill="#f0f0f0" /><path d="M3 3.300h6M3 5.500h6" stroke="#333" strokeWidth=".8" /><circle cx="9.700" cy="8.500" r="2.600" fill="#ddd" stroke="#222" strokeWidth=".8" /></svg>
          </TrayIcon>
        </Tray>
      </Taskbar>
      <OfficeButton><OfficeLogo /></OfficeButton>
    </Window>
  </>
);

export default App;
